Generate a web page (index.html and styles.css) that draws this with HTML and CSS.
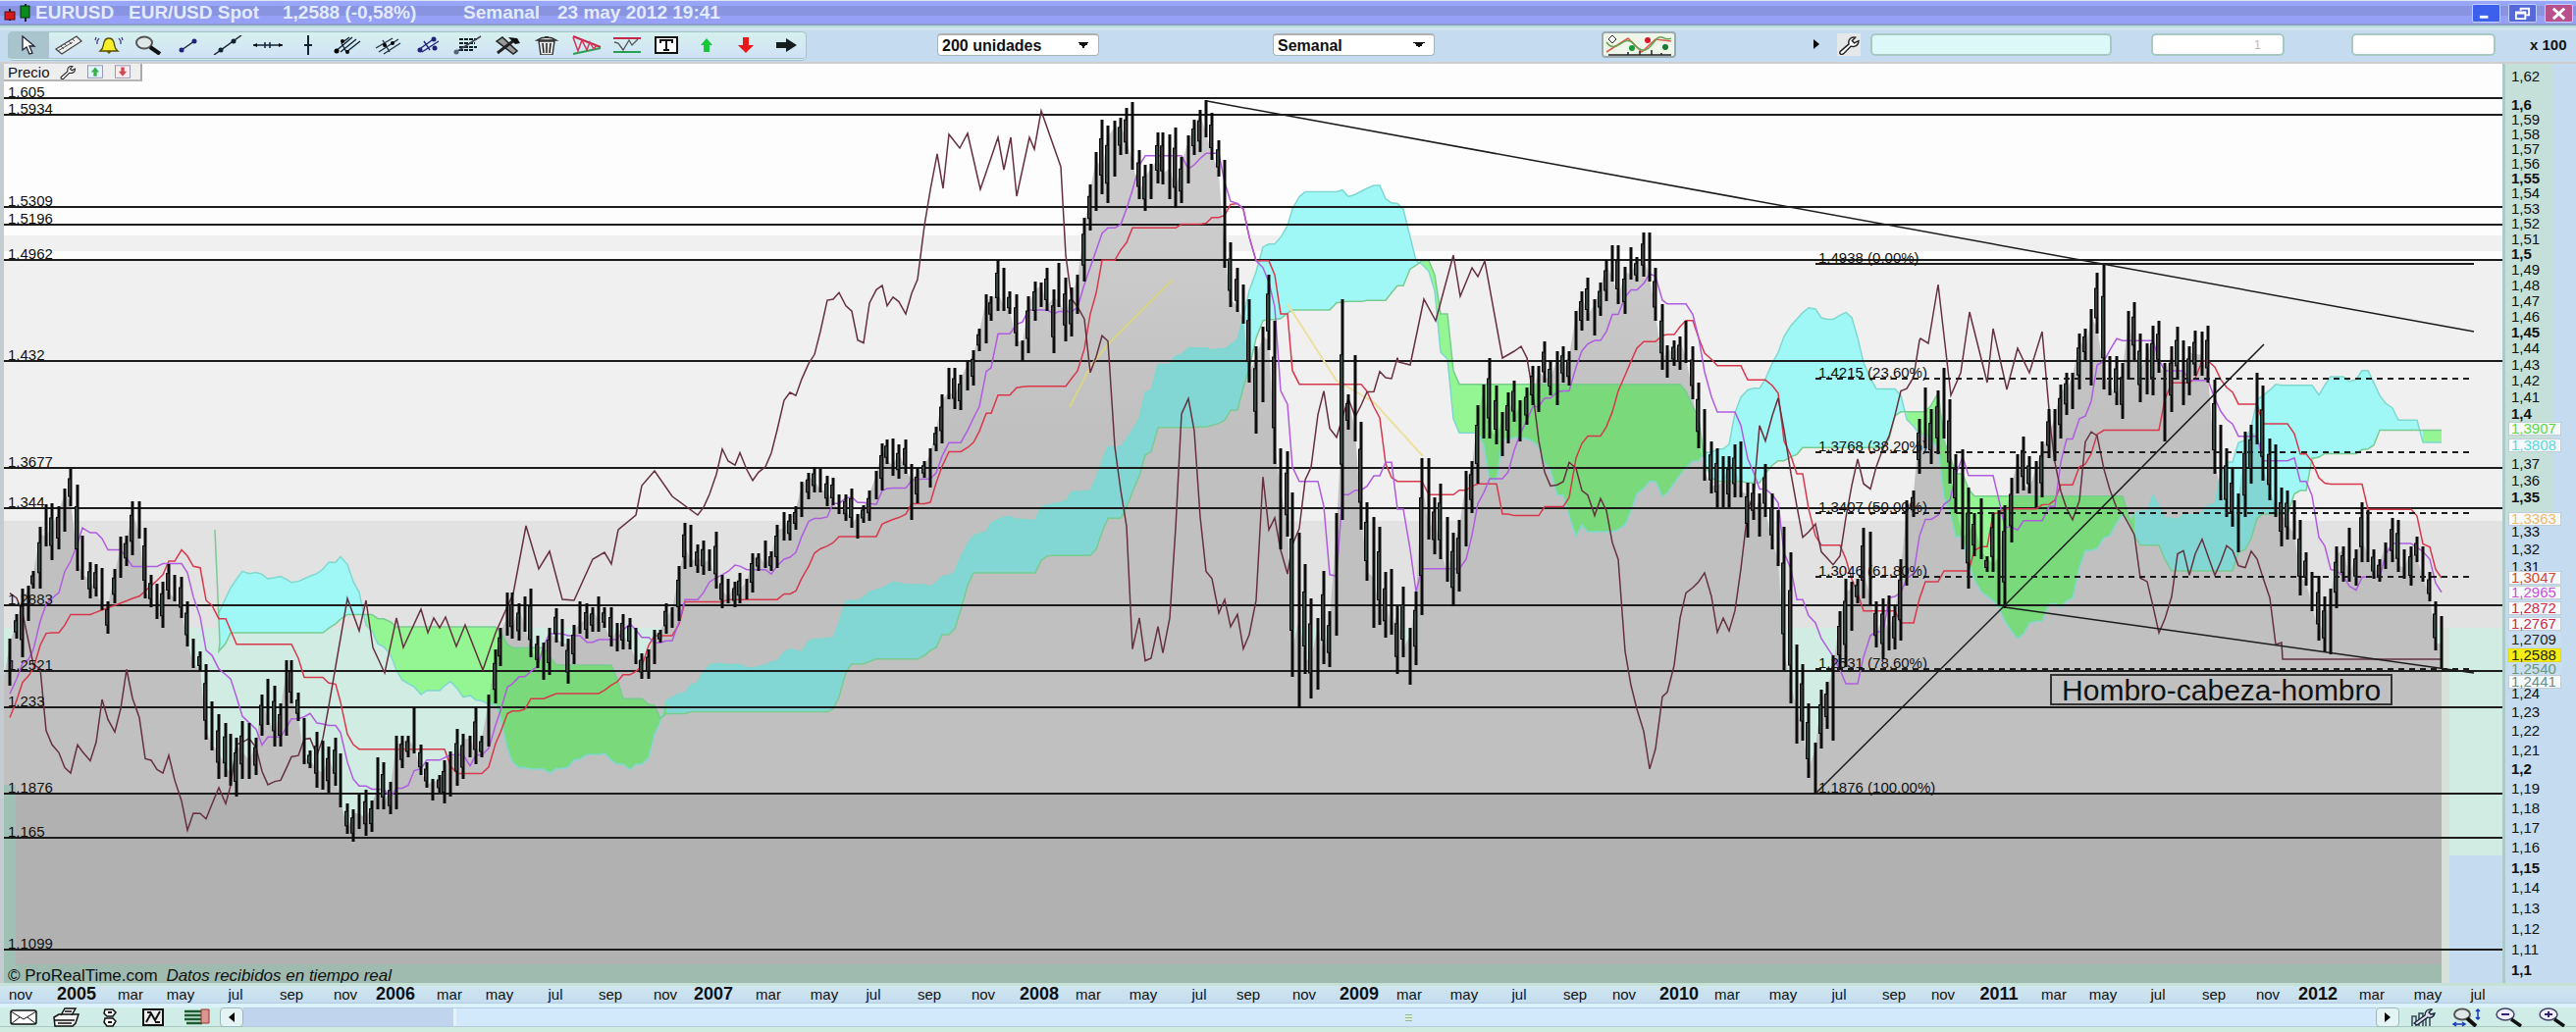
FILE: index.html
```html
<!DOCTYPE html>
<html lang="es">
<head>
    <meta charset="UTF-8">
    <meta name="viewport" content="width=device-width, initial-scale=1.0">
    <title>EURUSD - Semanal</title>
    <link rel="stylesheet" href="styles.css">
</head>
<body>
    <header class="titlebar">
        <svg class="app-icon" viewBox="0 0 28 18"><path d="M6 5v12M22 0v18" stroke="#222" stroke-width="2"/><rect x="1" y="8" width="10" height="8" fill="#d81818" stroke="#501010"/><rect x="17" y="2" width="9" height="12" fill="#0c8a1c" stroke="#053808"/></svg>
        <h1 class="title">
            <span>EURUSD</span>
            <span>EUR/USD Spot</span>
            <span>1,2588 (-0,58%)</span>
            <span>Semanal</span>
            <span>23 may 2012 19:41</span>
        </h1>
        <div class="window-buttons">
            <button class="win-btn" aria-label="Minimizar"><svg viewBox="0 0 28 18"><path d="M7 13h9" stroke="#fff" stroke-width="3"/></svg></button>
            <button class="win-btn restore" aria-label="Restaurar"><svg viewBox="0 0 28 18"><path d="M12 6V4h9v7h-3M7 8h10v7H7zM7 9h10" fill="none" stroke="#fff" stroke-width="2"/></svg></button>
            <button class="win-btn close" aria-label="Cerrar"><svg viewBox="0 0 28 18"><path d="M8 4l12 11M20 4L8 15" stroke="#fff" stroke-width="3"/></svg></button>
        </div>
    </header>

    <nav class="toolbar">
        <div class="tools">
            <button class="tool active" aria-label="Puntero"><svg viewBox="0 0 30 20"><path d="M9 1v14l4-3 3 7 3-1-3-7h5z" fill="#fff" stroke="#223" stroke-width="1.3"/></svg></button>
            <button class="tool" aria-label="Regla"><svg viewBox="0 0 30 20"><path d="M2 14L23 1l5 5L8 19z" fill="#f0f0f0" stroke="#444" stroke-width="1.3"/><path d="M7 11l3 3M11 9l2 2M15 6l3 3M19 4l2 2M4 16l15-9" stroke="#555"/></svg></button>
            <button class="tool" aria-label="Alarma"><svg viewBox="0 0 30 20"><path d="M6 16c4-3 3-6 4-9 1-3 3-4 5-4s4 1 5 4c1 3 0 6 4 9z" fill="#f6ee28" stroke="#554c00" stroke-width="1.3"/><path d="M12 16h6l-3 3z" fill="#665a00"/><path d="M5 3L3 6v3M2 2L1 5M25 3l2 3v3M28 2l1 3" fill="none" stroke="#443a88" stroke-width="1.3"/></svg></button>
            <button class="tool" aria-label="Lupa"><svg viewBox="0 0 30 20"><ellipse cx="11" cy="7.500" rx="8" ry="6" fill="#dfe8e8" stroke="#555" stroke-width="2"/><path d="M17 12l10 7" stroke="#111" stroke-width="4"/></svg></button>
            <button class="tool" aria-label="Segmento"><svg viewBox="0 0 30 20"><path d="M8 15L21 6" stroke="#223" stroke-width="1.5"/><circle cx="8" cy="15" r="2.500" fill="#227"/><circle cx="21" cy="6" r="2.500" fill="#227"/></svg></button>
            <button class="tool" aria-label="Recta"><svg viewBox="0 0 30 20"><path d="M1 20L29 0" stroke="#223" stroke-width="1.5"/><circle cx="8" cy="15" r="2.500" fill="#123"/><circle cx="21" cy="6" r="2.500" fill="#123"/></svg></button>
            <button class="tool" aria-label="Horizontal"><svg viewBox="0 0 30 20"><path d="M0 10h30M12 7v6M17 7v6" stroke="#123" stroke-width="1.5"/><path d="M0 10l4-2v4zM30 10l-4-2v4z"/></svg></button>
            <button class="tool" aria-label="Vertical"><svg viewBox="0 0 30 20"><path d="M15 0v20M11 10h8" stroke="#123" stroke-width="2"/></svg></button>
            <button class="tool" aria-label="Tridente"><svg viewBox="0 0 30 20"><path d="M2 17L20 2M9 8l5 9M8 17L24 4M14 17L28 6M9 8l8-6" stroke="#123" stroke-width="1.400"/><circle cx="4" cy="16" r="2.500"/><circle cx="10" cy="6" r="2"/><circle cx="15" cy="17" r="2"/></svg></button>
            <button class="tool" aria-label="Canal"><svg viewBox="0 0 30 20"><path d="M3 13L20 3M6 17L26 4M11 19L28 8M10 5l7 12" stroke="#234" stroke-width="1.400"/><circle cx="12" cy="10" r="2"/><circle cx="20" cy="8" r="2"/></svg></button>
            <button class="tool" aria-label="Paralelas"><svg viewBox="0 0 30 20"><path d="M5 15L22 3M9 17L26 6M11 6l6 9" stroke="#227" stroke-width="1.400"/><circle cx="7" cy="15" r="2.500" fill="#227"/><circle cx="22" cy="13" r="2.500" fill="#227"/><circle cx="21" cy="4" r="2.500" fill="#227"/></svg></button>
            <button class="tool" aria-label="Fibonacci"><svg viewBox="0 0 30 20"><path d="M7 4h18M7 8h16M7 12h18M7 15h14" stroke="#122" stroke-width="2" stroke-dasharray="4 1"/><path d="M2 18L29 1" stroke="#445" stroke-width="1.500"/><circle cx="4" cy="17" r="2.500" fill="#567"/></svg></button>
            <button class="tool" aria-label="Herramientas"><svg viewBox="0 0 30 20"><path d="M4 6l6-4 15 14-4 3z" fill="#999" stroke="#222" stroke-width="1.500"/><path d="M5 18L22 5" stroke="#222" stroke-width="3"/><path d="M16 2l9 1 3 5-5 1z" fill="#111"/></svg></button>
            <button class="tool" aria-label="Borrar"><svg viewBox="0 0 30 20"><path d="M7 6h16l-2 14H9zM5 5c6-4 14-4 20 0z" fill="#e8e8e8" stroke="#333" stroke-width="1.400"/><path d="M11 8l1 10M15 8v10M19 8l-1 10M13 2h4" stroke="#222" stroke-width="1.500"/></svg></button>
            <button class="tool" aria-label="Triángulo"><svg viewBox="0 0 30 20"><path d="M1 1l28 11" stroke="#c82848" stroke-width="2"/><path d="M1 19l28-6" stroke="#28a050" stroke-width="2"/><path d="M1 2l5 14 4-11 5 10 3-8 4 7 3-4" fill="none" stroke="#d03858" stroke-width="1.500"/></svg></button>
            <button class="tool" aria-label="Soportes"><svg viewBox="0 0 30 20"><path d="M1 3h28" stroke="#c82848" stroke-width="2"/><path d="M1 17h28" stroke="#28a050" stroke-width="2"/><path d="M2 7l4 1 5 7 6-10 3 5 6-6" fill="none" stroke="#555" stroke-width="1.300"/></svg></button>
            <button class="tool" aria-label="Texto"><svg viewBox="0 0 30 20"><rect x="4" y="2" width="22" height="16" fill="#fff" stroke="#111" stroke-width="2"/><path d="M9 8V5h12v3M15 5v10M12 15h6" fill="none" stroke="#111" stroke-width="2"/></svg></button>
            <button class="tool" aria-label="Flecha arriba"><svg viewBox="0 0 30 20"><path d="M15 3l6 7h-3v7h-6v-7H9z" fill="#18c838"/></svg></button>
            <button class="tool" aria-label="Flecha abajo"><svg viewBox="0 0 30 20"><path d="M15 18l-8-8h5V2h6v8h5z" fill="#e81818"/></svg></button>
            <button class="tool" aria-label="Flecha derecha"><svg viewBox="0 0 30 20"><path d="M5 7h10V3l11 7-11 7v-4H5z" fill="#141c1c"/></svg></button>
        </div>
        <div class="cell"><select class="combo" aria-label="Unidades"><option>200 unidades</option></select></div>
        <div class="cell"><select class="combo" aria-label="Periodo"><option>Semanal</option></select></div>
        <div class="cell"><button class="indicators" aria-label="Indicadores"><svg viewBox="0 0 70 22"><path d="M2 18l22-14 14 14L52 5l16 2" fill="none" stroke="#e05848" stroke-width="1.500"/><path d="M2 8c10 14 18-10 28 2s16 4 22-4 10 2 16-2" fill="none" stroke="#68a050" stroke-width="1.500"/><path d="M4 21h64M24 18v3M36 17v4M48 16v5M58 19v2" stroke="#222" stroke-width="1.500"/><circle cx="44" cy="6" r="3" fill="#d81828"/><circle cx="28" cy="14" r="3" fill="#189838"/><circle cx="62" cy="13" r="3" fill="#187838"/><path d="M8 1l4 4-4 4-4-4z" fill="#fff" stroke="#333"/></svg></button></div>
        <div class="cell">
            <button class="expand" aria-label="Expandir"><svg viewBox="0 0 12 12"><path d="M3 1v10l6-5z"/></svg></button>
            <button class="wrench" aria-label="Configurar"><svg viewBox="0 0 20 18"><path d="M2 15L10 8c-1-4 2-7 6-6l-3 3 2 2 4-2c0 4-3 6-7 5l-7 7c-2 1-4 0-3-2z" fill="#fff" stroke="#222" stroke-width="1.300"/></svg></button>
            <input class="field wide" type="text" aria-label="Orden">
        </div>
        <div class="cell"><input class="field mid" type="text" value="1" aria-label="Cantidad"></div>
        <div class="cell"><input class="field long" type="text" aria-label="Precio límite"></div>
        <div class="cell multiplier">x 100</div>
    </nav>

    <main class="workspace">
        <section class="plot" id="plot">
            <svg class="chart" id="chart" viewBox="4 65 2546 937" preserveAspectRatio="none" role="img" aria-label="EURUSD semanal con Ichimoku"></svg>
            <div class="panel-tab">
                <span>Precio</span>
                <svg viewBox="0 0 20 18"><path d="M2 15L10 8c-1-4 2-7 6-6l-3 3 2 2 4-2c0 4-3 6-7 5l-7 7c-2 1-4 0-3-2z" fill="#fff" stroke="#222" stroke-width="1.300"/></svg>
                <svg viewBox="0 0 20 18"><rect x="1" y="1" width="18" height="15" fill="#e4f4ff" stroke="#88a"/><path d="M10 3l5 6h-3v5H8V9H5z" fill="#38b048"/></svg>
                <svg viewBox="0 0 20 18"><rect x="1" y="1" width="18" height="15" fill="#fbecec" stroke="#88a"/><path d="M10 14l5-6h-3V3H8v5H5z" fill="#d04858"/></svg>
            </div>
            <div class="note">Hombro-cabeza-hombro</div>
            <p class="credits">© ProRealTime.com <em>Datos recibidos en tiempo real</em></p>
        </section>
        <aside class="price-axis" id="priceAxis"></aside>
    </main>

    <div class="time-axis" id="timeAxis"></div>

    <footer class="bottombar">
        <div class="bottom-tools">
            <button class="tool" aria-label="Correo"><svg viewBox="0 0 30 20"><rect x="2" y="3" width="26" height="14" rx="2" fill="#fff" stroke="#111" stroke-width="1.500"/><path d="M2 4l13 8 13-8M2 17l9-7M28 17l-9-7" fill="none" stroke="#111"/></svg></button>
            <button class="tool" aria-label="Imprimir"><svg viewBox="0 0 30 20"><path d="M9 8l4-7h11l-4 7M2 10l5-3h20l-3 9-3 3H3z" fill="#f4f4f4" stroke="#111" stroke-width="1.500"/><path d="M3 13h20M6 16h14M13 4h7" stroke="#111" stroke-width="1.500"/></svg></button>
            <button class="tool" aria-label="Enlazar"><svg viewBox="0 0 30 20"><path d="M10 2h8l3 3-3 4h-6l-3-3zM10 11h8l3 3-3 5h-6l-3-4z" fill="#fff" stroke="#111" stroke-width="1.500"/><path d="M13 5h4M13 15h4" stroke="#111" stroke-width="2"/></svg></button>
            <button class="tool" aria-label="Gráfico"><svg viewBox="0 0 30 20"><rect x="5" y="2" width="20" height="16" fill="#eee" stroke="#111" stroke-width="2"/><path d="M8 15l5-9 4 7 5-9M9 5h4M17 15h5" fill="none" stroke="#111" stroke-width="2"/></svg></button>
            <button class="tool" aria-label="Lista"><svg viewBox="0 0 30 20"><path d="M3 4h18M3 8h18M3 12h18M5 16h16" stroke="#1c5c30" stroke-width="2.500"/><path d="M20 2h8v14h-8z" fill="#d89890" stroke="#a03030"/></svg></button>
        </div>
        <div class="scrollbar">
            <button class="scroll-btn" aria-label="Izquierda"><svg viewBox="0 0 12 12"><path d="M9 1v10L3 6z"/></svg></button>
            <div class="scroll-track"><div class="scroll-thumb"></div><div class="scroll-grip"></div></div>
            <button class="scroll-btn" aria-label="Derecha"><svg viewBox="0 0 12 12"><path d="M3 1v10l6-5z"/></svg></button>
        </div>
        <div class="zoom-tools">
            <button class="tool" aria-label="Ajustes"><svg viewBox="0 0 30 20"><path d="M4 19V9h4v10M11 19V6h4v13M18 19V9h4v10" fill="none" stroke="#345" stroke-width="1.500"/><path d="M6 16L17 8c0-4 3-7 7-6l-3 3 2 2 4-1c-1 4-4 5-7 4L9 18z" fill="#dde" stroke="#123" stroke-width="1.300"/></svg></button>
            <button class="tool" aria-label="Zoom total"><svg viewBox="0 0 30 20"><ellipse cx="11" cy="7" rx="8" ry="5.500" fill="#dfe8e8" stroke="#555" stroke-width="2"/><path d="M16 11l9 8" stroke="#111" stroke-width="4"/><path d="M2 17h12M5 15l-3 2 3 2M11 15l3 2-3 2M27 2v10M25 4l2-2 2 2M25 10l2 2 2-2" fill="none" stroke="#1838c0" stroke-width="1.500"/></svg></button>
            <button class="tool" aria-label="Alejar"><svg viewBox="0 0 30 20"><ellipse cx="11" cy="7" rx="9" ry="6" fill="#eef" stroke="#446" stroke-width="1.500"/><path d="M7 7h8" stroke="#327" stroke-width="2"/><path d="M17 12l10 7" stroke="#111" stroke-width="3.500"/></svg></button>
            <button class="tool" aria-label="Acercar"><svg viewBox="0 0 30 20"><ellipse cx="11" cy="7" rx="9" ry="6" fill="#eef" stroke="#446" stroke-width="1.500"/><path d="M7 7h8M11 4v6" stroke="#327" stroke-width="2"/><path d="M17 12l10 7" stroke="#111" stroke-width="3.500"/></svg></button>
        </div>
    </footer>

    <script src="chart.js"></script>
</body>
</html>
```
FILE: styles.css
```css
* {
    box-sizing: border-box;
}

body {
    margin: 0;
    height: 100vh;
    display: flex;
    flex-direction: column;
    background: #c5dcf0;
    color: #111;
    font-family: "Liberation Sans", Arial, sans-serif;
    font-size: 15px;
    overflow: hidden;
}

button {
    padding: 0;
    border: none;
    background: none;
    font: inherit;
}

/* barra de titulo */
.titlebar {
    height: 26px;
    flex: none;
    display: flex;
    align-items: center;
    padding: 0 3px 0 4px;
    background: linear-gradient(#dfe6f6 0 1px, #98a6fa 1px 6px, #8894e0 6px 16px, #96a0f6 16px 24px, #8c9cc8 24px);
}

.app-icon {
    width: 28px;
    height: 18px;
}

.title {
    margin: 0 0 0 4px;
    flex: 1;
    display: grid;
    grid-template-columns: 95px 157px 184px 96px 1fr;
    color: #e2ebff;
    font-size: 19px;
    line-height: 24px;
    white-space: nowrap;
}

.window-buttons {
    display: flex;
    gap: 8px;
}

.win-btn {
    width: 29px;
    height: 19px;
    border: 1px solid #c4ceff;
    border-radius: 2px;
    background: #3c60ec;
}

.win-btn svg {
    display: block;
    width: 27px;
    height: 17px;
}

.win-btn.restore {
    background: #5468d8;
}

.win-btn.close {
    background: #b8508c;
}

/* herramientas */
.toolbar {
    height: 39px;
    flex: none;
    display: grid;
    grid-template-columns: 947fr 342fr 335fr 213fr 347fr 204fr 182fr 47fr;
    padding: 6px 0 4px 8px;
    background: linear-gradient(#b8dcdc 0 2px, #cfe4ee 2px 5px, #c5dcf0 5px 37px, #cfcfcf 37px);
}

.tools {
    width: 86%;
    display: grid;
    grid-template-columns: repeat(20, 1fr);
    border: 1px solid #a4c4c8;
    border-bottom: 3px double #a4c0c8;
    border-radius: 5px;
    background: linear-gradient(#d6f0ee, #cfe2f6);
}

.tool {
    display: flex;
    align-items: center;
    justify-content: center;
}

.tool svg {
    width: 30px;
    height: 20px;
}

.tool.active {
    background: #a9c4cc;
}

.cell {
    display: flex;
    align-items: center;
    padding-bottom: 3px;
}

.combo {
    width: 165px;
    height: 23px;
    padding: 0 4px;
    appearance: none;
    border: 1px solid #a4b4b8;
    border-top: 2px solid #b0b0b0;
    border-radius: 4px;
    background: linear-gradient(to bottom right, #111 50%, transparent 50%) no-repeat right 9px center / 6px 6px,
        linear-gradient(to bottom left, #111 50%, transparent 50%) no-repeat right 15px center / 6px 6px, #fff;
    color: #111;
    font: bold 16px "Liberation Sans", Arial, sans-serif;
}

.indicators {
    width: 76px;
    height: 27px;
    border: 2px solid #9aaab0;
    border-radius: 4px;
    background: #eef6ea;
}

.indicators svg {
    display: block;
    width: 72px;
    height: 22px;
}

.expand {
    width: 27px;
    text-align: left;
}

.expand svg {
    width: 12px;
    height: 12px;
}

.wrench {
    width: 24px;
    height: 23px;
    margin-right: 10px;
    background: #e4e8e8;
}

.wrench svg {
    display: block;
    width: 24px;
    height: 20px;
}

.field {
    height: 23px;
    padding: 0 22px;
    border: 2px solid #a8c8c4;
    border-radius: 5px;
    background: #fff;
    color: #bbb;
    font: 13px "Liberation Sans", Arial, sans-serif;
    text-align: right;
}

.field.wide {
    width: 246px;
    background: #dcf8f8;
}

.field.mid {
    width: 136px;
}

.field.long {
    width: 147px;
}

.multiplier {
    font-weight: bold;
}

/* grafico */
.workspace {
    flex: 1;
    min-height: 0;
    display: grid;
    grid-template-columns: 1fr 75px;
}

.plot {
    position: relative;
    border-left: 4px solid #c4ccd0;
}

.chart {
    position: absolute;
    inset: 0;
    width: 100%;
    height: 100%;
}

.panel-tab {
    position: absolute;
    top: 0;
    left: 0;
    height: 18px;
    display: flex;
    align-items: center;
    gap: 8px;
    padding: 0 8px 0 4px;
    border-right: 2px solid #aaa;
    border-bottom: 2px solid #b4b4b4;
    background: #eeeeee;
}

.panel-tab svg {
    width: 20px;
    height: 15px;
}

.level-label {
    position: absolute;
    transform: translateY(-100%);
    font-size: 15px;
    line-height: 13px;
    white-space: nowrap;
}

.note {
    position: absolute;
    left: 81.9%;
    top: 66.4%;
    width: 349px;
    height: 32px;
    border: 2px solid #333;
    font-size: 30px;
    line-height: 30px;
    text-align: center;
}

.credits {
    position: absolute;
    left: 4px;
    bottom: 0;
    margin: 0;
    font-size: 17px;
    line-height: 14px;
}

.credits em {
    margin-left: 4px;
}

.price-axis {
    position: relative;
    border-left: 3px solid #abcac8;
    background: linear-gradient(90deg, #c4e0d8 0 48px, #c5dcf0 48px) no-repeat 0 0 / 100% 50%;
}

.price {
    position: absolute;
    left: 6px;
    transform: translateY(-50%);
    font-size: 15px;
    line-height: 12px;
}

.price.strong {
    font-weight: bold;
}

.price.tag {
    left: 3px;
    width: 54px;
    height: 14px;
    padding-left: 2px;
    border: 1px solid #c4ccd4;
    background: #f6fafc;
}

.price.tag.last {
    border-color: #e0d818;
    background: #f6ee10;
}

.price.tag.plain {
    border-color: transparent;
    background: #c9def0;
}

.time-axis {
    position: relative;
    height: 20px;
    flex: none;
    background: linear-gradient(#c6e2d6 0 3px, #cfe6ee 3px, #c5dcf0);
}

.date {
    position: absolute;
    top: 3px;
    transform: translateX(-50%);
    font-size: 15px;
    line-height: 17px;
}

.date.year {
    font-size: 18px;
    font-weight: bold;
}

/* barra inferior */
.bottombar {
    height: 30px;
    flex: none;
    display: flex;
    align-items: center;
    background: linear-gradient(#b4cce4 0 1px, #dcf2fa 1px 5px, #d0ece6 5px 24px, #a8c8c0 24px 25px, #d0ece0 25px);
}

.bottom-tools,
.zoom-tools {
    display: flex;
    padding: 0 2px;
}

.bottom-tools .tool,
.zoom-tools .tool {
    width: 44px;
}

.scrollbar {
    flex: 1;
    height: 20px;
    display: flex;
}

.scroll-btn {
    width: 24px;
    border: 1px solid #9cb8bc;
    border-radius: 4px;
    background: #e4f4f4;
}

.scroll-btn svg {
    width: 12px;
    height: 12px;
}

.scroll-track {
    flex: 1;
    display: flex;
    align-items: center;
    border: solid #b4cce0;
    border-width: 1px 0;
    background: #d2e8fb;
}

.scroll-thumb {
    width: 10%;
    height: 100%;
    border-right: 3px solid #e4f2fc;
    background: #c0d4ee;
}

.scroll-grip {
    width: 7px;
    height: 7px;
    margin-left: 44.5%;
    background: repeating-linear-gradient(#8fb89c 0 1px, #d8eed8 1px 3px);
}
```
FILE: chart.js
```js
// area del grafico en unidades del viewBox
const BOX = { x: 4, y: 65, w: 2546, h: 937 };
const LAST_X = 2488;
const SHIFT = 26;

// barras semanales: x, maximo, minimo
const raw = `10,651,699 17,626,651 23,600,670 29,597,633 34,582,600 41,537,600 47,514,557 53,513,571 60,516,560 66,498,542
72,478,516 79,494,582 84,546,591 92,573,610 98,575,608 104,579,622 110,613,646 117,580,615 123,547,589 129,546,577
135,511,566 142,511,549 148,538,610 154,586,619 160,595,631 166,593,640 172,575,611 178,586,613 185,588,630 191,613,659
197,651,681 204,664,684 210,677,754 216,715,765 223,728,794 230,737,792 235,748,801 241,752,812 247,735,794 254,737,794
261,752,790 267,708,750 273,692,739 280,699,761 286,717,761 292,673,750 297,673,717 304,706,735 310,732,779 316,765,783
323,746,803 329,755,805 335,761,808 342,752,801 347,768,823 354,819,850 360,825,858 366,810,845 373,805,852 379,816,848
385,772,825 391,777,825 398,797,830 404,750,825 410,750,783 416,750,772 422,721,768 429,759,790 435,777,803 441,794,816
448,790,808 453,775,819 459,766,812 466,743,801 472,748,794 479,750,772 485,721,779 491,750,772 498,708,761 505,662,717
510,640,679 517,604,648 522,604,651 529,615,653 535,608,644 541,600,670 548,648,681 554,655,693 560,640,688 567,620,655
573,631,659 579,651,697 585,637,677 591,613,646 598,615,651 604,619,644 610,608,644 616,619,640 623,619,659 629,635,664
635,626,662 642,630,662 648,640,677 654,666,692 661,662,692 667,642,677 673,642,655 679,615,646 685,619,640 692,577,633
698,533,580 704,535,578 711,555,584 717,551,586 723,560,582 730,542,600 736,586,620 742,590,615 749,593,619 754,584,615
761,590,611 767,564,604 773,564,582 780,551,579 786,562,582 792,535,579 799,522,551 805,524,551 811,516,540 817,491,527
824,482,509 830,476,502 836,478,502 843,485,516 849,487,515 855,504,524 862,504,531 868,498,538 874,524,549 880,515,533
886,500,531 893,480,509 899,452,500 904,448,473 910,447,485 916,453,488 923,448,483 929,473,530 935,477,513 942,470,487
948,457,497 954,435,460 960,402,452 967,375,407 973,375,417 979,382,418 986,367,398 992,357,393 998,335,358 1005,300,350
1010,302,327 1017,265,317 1023,273,317 1029,297,320 1036,300,353 1042,347,368 1048,302,360 1055,287,327 1061,288,313 1067,273,317
1074,295,360 1079,268,313 1086,283,348 1092,293,343 1098,280,320 1105,222,287 1111,188,235 1117,155,215 1123,122,198 1129,128,207
1136,123,180 1142,120,158 1148,110,157 1154,104,173 1161,153,203 1167,168,215 1173,167,203 1180,135,187 1185,135,188 1192,137,203
1198,130,212 1204,160,207 1211,138,187 1217,122,158 1223,112,155 1229,102,140 1235,115,163 1242,143,180 1248,163,273 1254,247,313
1261,273,318 1267,290,330 1273,305,390 1280,353,442 1287,333,410 1293,280,357 1299,327,473 1305,457,560 1312,460,547 1317,502,690
1324,543,722 1330,575,687 1336,610,712 1343,630,703 1349,582,677 1355,623,680 1362,523,648 1368,305,530 1374,402,438 1381,362,450
1387,430,540 1393,512,592 1400,527,640 1406,537,637 1412,583,650 1418,580,647 1424,618,687 1430,598,670 1437,640,698 1443,603,678
1449,467,627 1456,467,550 1462,507,565 1468,493,570 1475,527,593 1481,543,618 1487,530,603 1494,480,557 1500,470,523 1506,413,493
1512,392,447 1518,365,447 1525,393,453 1531,420,465 1537,400,452 1543,388,430 1549,408,450 1556,395,433 1562,373,413 1568,373,420
1574,348,390 1580,367,403 1587,358,413 1593,353,390 1599,358,393 1606,317,357 1612,297,337 1618,283,327 1625,305,342 1631,288,322
1637,265,307 1643,250,287 1649,250,310 1656,272,320 1662,252,285 1668,262,287 1675,237,282 1681,237,287 1687,273,327 1694,310,377
1699,352,385 1706,347,373 1712,343,377 1718,327,370 1725,353,407 1731,390,457 1737,417,490 1744,450,503 1750,457,517 1756,465,517
1762,465,517 1768,453,507 1774,450,507 1781,492,548 1787,493,530 1793,503,547 1799,473,527 1806,503,560 1812,520,577 1818,537,683
1825,563,717 1831,657,758 1837,677,755 1843,717,793 1850,757,809 1856,703,763 1862,695,743 1868,668,755 1875,623,683 1881,590,680
1887,593,643 1893,590,615 1899,538,610 1906,542,617 1912,613,660 1919,610,672 1925,607,663 1931,617,662 1937,570,653 1943,510,597
1950,500,527 1956,427,483 1962,395,457 1968,417,473 1975,398,463 1981,375,447 1987,407,493 1993,463,523 2000,458,560 2006,497,600
2012,523,567 2019,508,570 2025,567,583 2031,522,583 2037,520,617 2043,515,620 2050,487,553 2056,463,503 2062,445,500 2068,465,503
2075,470,517 2081,450,507 2088,417,467 2094,417,470 2100,392,447 2106,380,423 2112,380,417 2119,340,397 2125,335,367 2131,315,393
2137,278,340 2144,270,397 2150,363,403 2157,363,413 2163,370,427 2169,317,387 2175,308,367 2181,340,410 2188,350,402 2194,332,403
2200,327,380 2206,370,450 2213,353,420 2219,333,387 2225,347,413 2231,353,403 2237,337,383 2244,338,383 2250,332,390 2257,387,483
2263,433,510 2269,457,527 2275,477,537 2281,503,563 2288,440,527 2294,433,493 2300,380,453 2306,393,490 2313,447,510 2319,453,527
2325,497,557 2331,500,550 2338,510,550 2344,530,607 2350,563,597 2356,583,623 2363,587,653 2369,608,665 2375,600,667 2381,557,620
2388,557,593 2394,538,593 2401,560,597 2407,512,573 2413,520,573 2419,560,590 2425,570,593 2431,553,580 2438,528,573 2444,530,583
2450,560,590 2457,557,597 2463,547,573 2469,557,593 2476,583,613 2482,613,663 2488,628,682`;

// tramos de la linea retrasada con cierres conocidos: x, y
const knownCloses = [
    `335,720 354,610 366,643 373,612 380,660 392,686 404,630 411,660 429,621 436,645 442,630 448,640 454,629 465,659 474,637
    492,683 505,645 523,605 536,536 549,580 560,562 573,611 585,612 604,570 616,563 623,575 630,540 648,525 654,495 667,480 685,506 711,525`,
    `955,157 961,192 967,137 978,151 986,136 999,193 1017,140 1023,173 1030,140 1036,200 1049,140 1054,152 1061,113 1081,170 1086,260`,
    `1425,369 1437,372 1451,305 1463,327 1481,260 1488,302 1500,273 1506,282 1513,266 1531,365 1543,358 1550,353`,
    `1957,345 1965,350 1975,290 1988,403 1998,380 2007,318 2025,390 2031,335 2045,397 2056,355 2068,380 2081,338 2090,440`
].map(part => part.split(/\s+/).map(p => p.split(',').map(Number)));

const bars = raw.split(/\s+/).map(b => {
    const [x, hi, lo] = b.split(',').map(Number);
    return { x, hi, lo, mid: (hi + lo) / 2 };
});

// semanas anteriores a la zona visible, solo para los calculos
const before = [[-52, 700], [-40, 640], [-30, 720], [-26, 800], [-20, 740], [-12, 760], [-4, 720], [0, 675]];
const history = [];
for (let i = -52; i < 0; i++) {
    const k = before.findIndex(p => p[0] > i);
    const [a, b] = [before[k - 1], before[k]];
    const mid = a[1] + (b[1] - a[1]) * (i - a[0]) / (b[0] - a[0]);
    history.push({ hi: mid - 25, lo: mid + 25 });
}
const all = history.concat(bars);

// escala logaritmica
const priceY = p => 100 + (Math.log(1.605) - Math.log(p)) * 2353.3;
const yPrice = y => 1.605 * Math.exp((100 - y) / 2353.3);

function middle(i, n) {
    const win = all.slice(Math.max(0, i + 53 - n), i + 53);
    const high = yPrice(Math.min(...win.map(b => b.hi)));
    const low = yPrice(Math.max(...win.map(b => b.lo)));
    return priceY((high + low) / 2);
}

bars.forEach((b, i) => {
    const next = bars[i + 1] || b;
    const edge = (b.lo - b.hi) * 0.12;
    b.close = Math.max(b.hi + edge, Math.min(b.lo - edge, b.mid + (next.mid - b.mid) * 1.8));
    b.tenkan = middle(i, 9);
    b.kijun = middle(i, 26);
    b.a = (b.tenkan + b.kijun) / 2;
    b.b = middle(i, 52);
});

const left = x => `${(x - BOX.x) / BOX.w * 100}%`;
const top_ = y => `${(y - BOX.y) / BOX.h * 100}%`;
const path = pts => 'M' + pts.map(p => p.join(' ')).join('L');
const line = (pts, color, w = 1.5, extra = '') =>
    `<path d="${path(pts)}" fill="none" stroke="${color}" stroke-width="${w}" ${extra}/>`;
const rect = (x, y, x2, y2, fill) => `<rect x="${x}" y="${y}" width="${x2 - x}" height="${y2 - y}" fill="${fill}"/>`;

// fondo
let svg = `<defs><linearGradient id="shade" gradientUnits="userSpaceOnUse" x1="0" y1="65" x2="0" y2="1002">
    <stop offset="0.2" stop-color="#cbcbcb"/><stop offset="0.4" stop-color="#c0c0c0"/>
    <stop offset="0.793" stop-color="#c0c0c0"/><stop offset="0.793" stop-color="#b1b1b1"/>
    <stop offset="0.98" stop-color="#b1b1b1"/><stop offset="0.98" stop-color="#9fbbb0"/></linearGradient>`;
const area = path([[4, 1002], [4, 690], ...bars.map(b => [b.x, b.close]), [LAST_X, 1002]]) + 'Z';
svg += `<clipPath id="under"><path d="${area}"/></clipPath></defs>`;
svg += rect(4, 65, 2550, 240, '#fdfdfd') + rect(4, 240, 2550, 531, '#f0f0f0') + rect(4, 531, 2550, 640, '#e2e2e2')
    + rect(4, 640, 2550, 872, '#d1ece3') + rect(4, 872, 2550, 1002, '#c5dcf0') + rect(4, 256, 2550, 264, '#fdfdfd');

// nube: tramos azules (A sobre B) y verdes
const cloud = [];
for (let i = 8; i + SHIFT < bars.length; i++) {
    cloud.push({ x: bars[i + SHIFT].x, a: bars[i].a, b: bars[i].b });
}
function cloudFill(blue, green) {
    let out = '';
    let run = [cloud[0]];
    for (let i = 1; i <= cloud.length; i++) {
        const c = cloud[i];
        if (c) run.push(c);
        if (!c || (c.a < c.b) !== (cloud[i - 1].a < cloud[i - 1].b)) {
            const pts = [...run.map(p => [p.x, p.a]), ...run.slice().reverse().map(p => [p.x, p.b])];
            out += `<path d="${path(pts)}Z" fill="${cloud[i - 1].a < cloud[i - 1].b ? blue : green}"/>`;
            run = [c];
        }
    }
    return out;
}
svg += cloudFill('#a0f8f6', '#94f692');
svg += `<path d="${area}" fill="url(#shade)"/>`;
svg += `<g clip-path="url(#under)">${cloudFill('#82d7d4', '#7ad97a')}</g>`;
svg += rect(4, 800, 16, 1002, '#9fc0b4') + rect(LAST_X, 640, 2496, 1002, '#d8e0da');
svg += line(cloud.map(c => [c.x, c.a]), '#7ed8d0');
svg += line([[219, 540], [224, 655], ...cloud.map(c => [c.x, c.b])], '#78cc90');

// niveles horizontales
const levels = ['1,605', '1,5934', '1,5309', '1,5196', '1,4962', '1,432', '1,3677', '1,344', '1,2883', '1,2521', '1,233', '1,1876', '1,165', '1,1099'];
const num = s => parseFloat(s.replace(',', '.'));
let labels = '';
levels.forEach(l => {
    const y = Math.round(priceY(num(l)));
    svg += rect(4, y - 1, 2550, y + 1, '#1c1c1c');
    labels += `<span class="level-label" style="left:${left(8)};top:${top_(y)}">${l}</span>`;
});

// indicadores
svg += line([[1090, 415], [1112, 372], [1130, 350], [1195, 285]], '#d8d488', 2);
svg += line([[1312, 310], [1362, 388], [1400, 410], [1450, 465]], '#ece0a0', 2);
svg += line(bars.map(b => [b.x, b.kijun]), '#d8384c');
svg += line(bars.map(b => [b.x, b.tenkan]), '#b05ce0');
let lagging = bars.slice(SHIFT).map((b, i) => [bars[i].x, b.close]);
knownCloses.forEach(part => {
    const from = part[0][0];
    const to = part[part.length - 1][0];
    lagging = lagging.filter(p => p[0] < from || p[0] > to).concat(part);
});
lagging.sort((a, b) => a[0] - b[0]);
svg += line([...lagging.filter(p => p[0] < 2326), [2326, 672], [LAST_X, 672]], '#66303f');

// velas
bars.forEach((b, i) => {
    svg += line([[b.x, b.hi], [b.x, b.lo]], '#0c0c0c', 3);
    if (i % 3) {
        const h = (b.lo - b.hi) / 4;
        svg += line([[b.x - 1, b.hi + h], [b.x - 1, b.lo - h]], '#0c0c0c', 4);
        svg += line([[b.x - 1, b.hi + h + 1], [b.x - 1, b.lo - h - 1]], i % 2 ? '#5c7c70' : '#6c6468', 1);
    }
});

// fibonacci
[['1,4938', '0,00%'], ['1,4215', '23,60%'], ['1,3768', '38,20%'], ['1,3407', '50,00%'], ['1,3046', '61,80%'], ['1,2531', '78,60%'], ['1,1876', '100,00%']].forEach(([p, pct], i) => {
    const y = Math.round(priceY(num(p)));
    svg += line([[1850, y], [2521, y]], '#1c1c1c', 2, i > 0 && i < 6 ? 'stroke-dasharray="6 5"' : '');
    labels += `<span class="level-label" style="left:${left(1853)};top:${top_(y)}">${p} (${pct})</span>`;
});

// directrices
svg += line([[1230, 103], [2521, 338]], '#1c1c1c') + line([[1850, 809], [2043, 617], [2307, 351]], '#1c1c1c')
    + line([[2043, 619], [2521, 686]], '#1c1c1c');
document.getElementById('chart').innerHTML = svg;
document.getElementById('plot').insertAdjacentHTML('beforeend', labels);

// eje de precios
let axis = '';
const hidden = [161, 139, 138, 134, 130, 129, 128, 127, 126, 125];
for (let c = 110; c <= 162; c++) {
    if (hidden.includes(c)) continue;
    const text = String(c / 100).replace('.', ',');
    axis += `<span class="price ${c % 5 ? '' : 'strong'}" style="top:${top_(priceY(c / 100))}">${text}</span>`;
}
const tags = [
    ['1,3907', '#58d848', 437, ''], ['1,3808', '#58d8e0', 454, ''], ['1,3363', '#f0b868', 529, ''],
    ['1,3047', '#d04830', 589, ''], ['1,2965', '#c850d8', 604, ''], ['1,2872', '#d02848', 620, ''],
    ['1,2767', '#d02848', 636, ''], ['1,2709', '#222', 652, 'plain'], ['1,2588', '#222', 668, 'last'],
    ['1,2540', '#6c9878', 682, 'plain'], ['1,2441', '#6c8c88', 695, '']
];
tags.forEach(([t, color, y, kind]) => {
    axis += `<span class="price tag ${kind}" style="top:${top_(y)};color:${color}">${t}</span>`;
});
document.getElementById('priceAxis').innerHTML = axis;

// eje de tiempo
const dates = [21, 78, 133, 184, 240, 297, 352, 403, 458, 509, 566, 622, 678, 727, 783, 840, 890, 947, 1002, 1059, 1109, 1165, 1222, 1272, 1329, 1385,
    1436, 1492, 1548, 1605, 1655, 1711, 1760, 1817, 1874, 1930, 1980, 2037, 2093, 2143, 2199, 2256, 2311, 2362, 2417, 2474, 2525];
const months = ['nov', '', 'mar', 'may', 'jul', 'sep'];
document.getElementById('timeAxis').innerHTML = dates.map((x, i) => {
    const year = i % 6 === 1;
    return `<span class="date ${year ? 'year' : ''}" style="left:${x / 2625 * 100}%">${year ? 2005 + (i - 1) / 6 : months[i % 6]}</span>`;
}).join('');
```
